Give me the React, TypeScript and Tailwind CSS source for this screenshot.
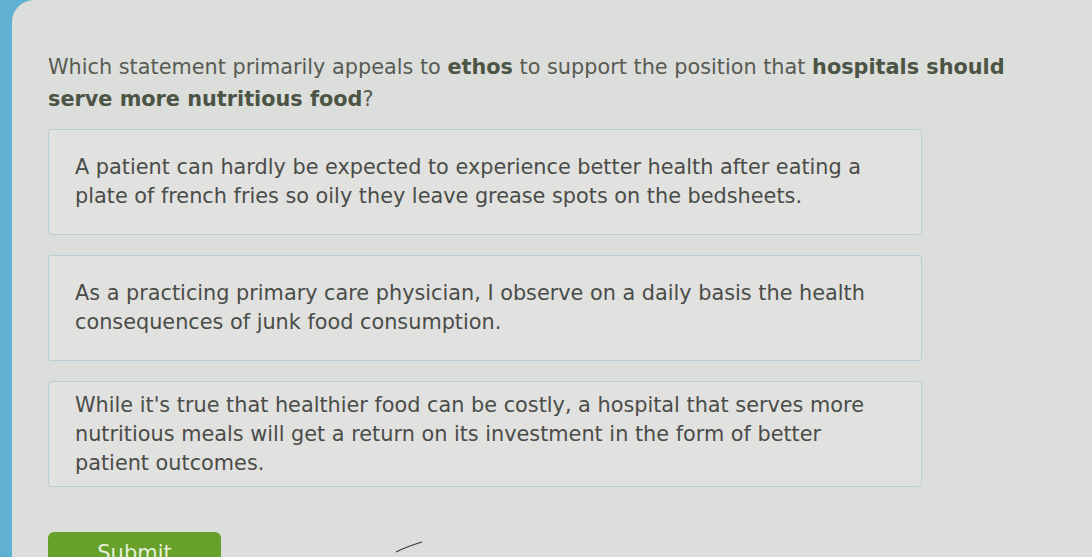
import React from "react";

const options = [
  "A patient can hardly be expected to experience better health after eating a plate of french fries so oily they leave grease spots on the bedsheets.",
  "As a practicing primary care physician, I observe on a daily basis the health consequences of junk food consumption.",
  "While it's true that healthier food can be costly, a hospital that serves more nutritious meals will get a return on its investment in the form of better patient outcomes.",
];

export default function App() {
  return (
    <div
      className="flex h-[557px] w-[1092px] overflow-hidden bg-[#60b0d3]"
      style={{ fontFamily: '"DejaVu Sans", Verdana, sans-serif' }}
    >
      <div className="w-[12px] shrink-0 bg-[#60b0d3]" />
      <div className="relative flex-1 rounded-tl-[22px] bg-[#dcdedb] pl-[36px] pt-[51px]">
        <p className="w-[1000px] text-[20.8px] leading-[32px] text-[#575b53]">
          Which statement primarily appeals to <b className="text-[#4c5445]">ethos</b> to support the position that{" "}
          <b className="text-[#4c5445]">hospitals should serve more nutritious food</b>?
        </p>
        <div className="mt-[14px] flex w-[874px] flex-col gap-[20px]">
          {options.map((t, i) => (
            <div
              key={i}
              className="flex h-[106px] items-center rounded-[3px] border border-[#b9cfd6] bg-[#e1e2df] pl-[26px]"
            >
              <p className="max-w-[820px] text-[20.8px] leading-[29px] text-[#4a4c49]">{t}</p>
            </div>
          ))}
        </div>
        <button className="mt-[45px] h-[40px] w-[173px] rounded-[6px] bg-[#67a02b] pt-[2px] text-[21px] leading-[36px] text-[#e6efd9]">
          Submit
        </button>
        <svg className="absolute left-[382px] top-[540px]" width="30" height="14" viewBox="0 0 30 14">
          <path d="M2 12 C 10 8, 18 5, 28 2" stroke="#3a3a3a" strokeWidth="1.2" fill="none" />
        </svg>
      </div>
    </div>
  );
}
